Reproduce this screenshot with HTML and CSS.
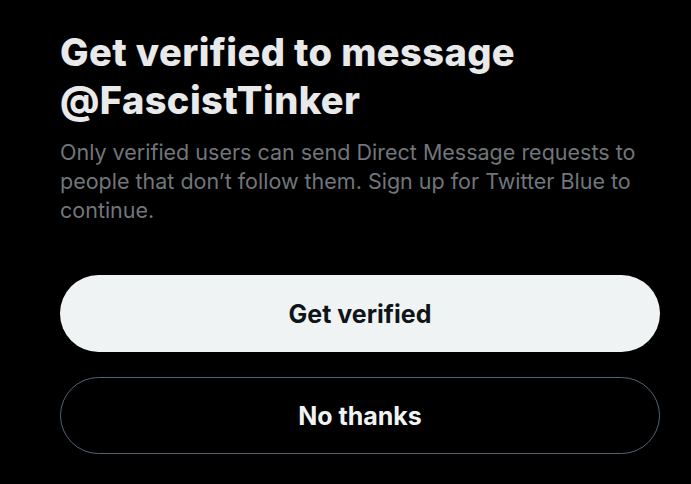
FILE: index.html
```html
<!DOCTYPE html>
<html lang="en">
<head>
    <meta charset="UTF-8">
    <meta name="viewport" content="width=device-width, initial-scale=1.0">
    <title>Get verified</title>
    <link rel="stylesheet" href="styles.css">
</head>
<body>
    <div class="dialog">
        <h1 class="title">Get verified to message @FascistTinker</h1>
        <p class="text">Only verified users can send Direct Message requests to people that don’t follow them. Sign up for Twitter Blue to continue.</p>
        <div class="actions">
            <button class="btn btn-primary">Get verified</button>
            <button class="btn btn-outline">No thanks</button>
        </div>
    </div>
</body>
</html>
```

FILE: styles.css
```css
body {
    margin: 0;
    background-color: #000;
    font-family: Inter, "Liberation Sans", sans-serif;
    color: #e7e9ea;
}
.dialog {
    width: 600px;
    padding: 28px 31px 0 60px;
}
.title {
    margin: 0;
    font-size: 38px;
    line-height: 48px;
    font-weight: 800;
    letter-spacing: 0.4px;
    width: 520px;
}
.text {
    margin: 14px 0 0;
    font-size: 21.5px;
    line-height: 29px;
    color: #71767b;
}
.actions {
    display: flex;
    flex-direction: column;
    gap: 25px;
    margin-top: 50px;
}
.btn {
    height: 77px;
    border-radius: 40px;
    font-family: Inter, "Liberation Sans", sans-serif;
    font-size: 25px;
    font-weight: 700;
    cursor: pointer;
}
.btn-primary {
    background-color: #eff3f4;
    color: #0f1419;
    border: none;
}
.btn-outline {
    background-color: #000;
    color: #eff3f4;
    border: 1px solid #536471;
}
```
